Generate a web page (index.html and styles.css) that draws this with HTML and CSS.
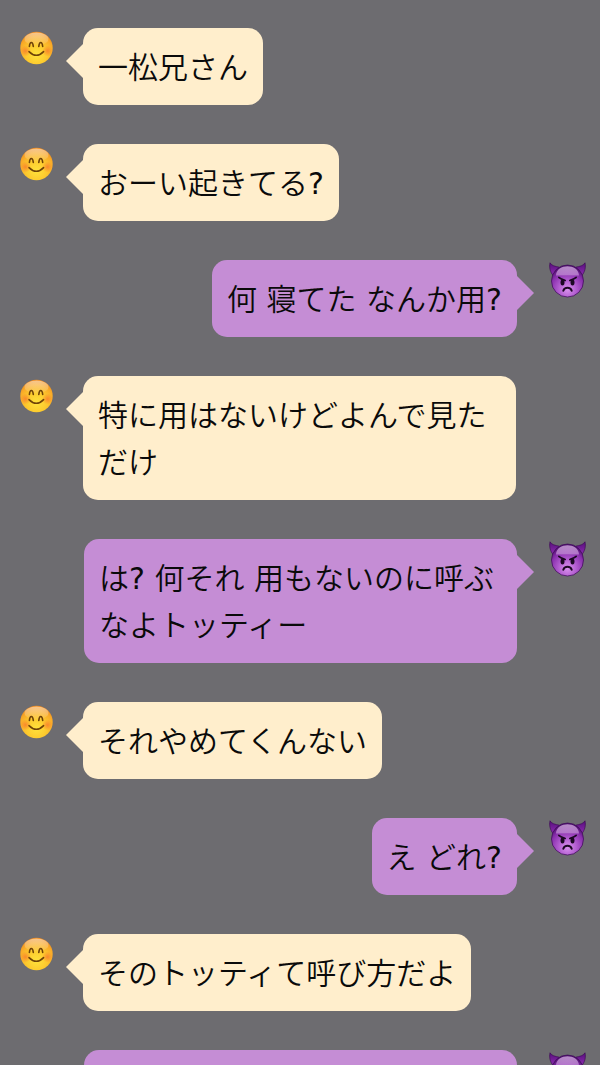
FILE: index.html
```html
<!DOCTYPE html>
<html lang="ja">
  <head>
    <meta charset="utf-8" />
    <meta name="viewport" content="width=device-width, initial-scale=1.0" />
    <title>トーク</title>
    <link rel="stylesheet" href="styles.css">
  </head>

  <body>
    <!-- shared avatars -->
    <svg class="defs" aria-hidden="true">
      <defs>
        <radialGradient id="face" cx="50%" cy="70%" r="68%">
          <stop offset="0" stop-color="#ffe23c" />
          <stop offset="0.45" stop-color="#fdcb2e" />
          <stop offset="0.8" stop-color="#f9ab28" />
          <stop offset="1" stop-color="#ee8a1c" />
        </radialGradient>
        <linearGradient id="shine" x1="0" y1="0" x2="0" y2="1">
          <stop offset="0" stop-color="#fff" stop-opacity="0.5" />
          <stop offset="1" stop-color="#fff" stop-opacity="0.05" />
        </linearGradient>
        <radialGradient id="blush">
          <stop offset="0" stop-color="#f8742c" stop-opacity="0.75" />
          <stop offset="1" stop-color="#f8742c" stop-opacity="0" />
        </radialGradient>
        <radialGradient id="devil" cx="50%" cy="76%" r="72%">
          <stop offset="0" stop-color="#d992ee" />
          <stop offset="0.4" stop-color="#b05bce" />
          <stop offset="0.75" stop-color="#882eac" />
          <stop offset="1" stop-color="#4b0b6b" />
        </radialGradient>
        <linearGradient id="devilShine" x1="0" y1="0" x2="0" y2="1">
          <stop offset="0" stop-color="#c9a3d6" stop-opacity="0.85" />
          <stop offset="1" stop-color="#bb83d0" stop-opacity="0.8" />
        </linearGradient>
        <linearGradient id="horn" x1="0" y1="0" x2="0" y2="1">
          <stop offset="0" stop-color="#57107a" />
          <stop offset="1" stop-color="#8f2cb4" />
        </linearGradient>
      </defs>
      <symbol id="smile" viewBox="0 0 33 34">
        <circle cx="16.5" cy="17" r="16.2" fill="url(#face)" />
        <ellipse cx="16.5" cy="8" rx="12" ry="6.5" fill="url(#shine)" />
        <circle cx="5.5" cy="20" r="5.5" fill="url(#blush)" />
        <circle cx="27.5" cy="20" r="5.5" fill="url(#blush)" />
        <path d="M9.4 15.5C9.8 10.2 12.8 10.2 13.3 15.5M18.8 15.5C19.3 10.2 22.2 10.2 22.7 15.5" fill="none" stroke="#6e4208" stroke-width="1.6" stroke-linecap="round" />
        <path d="M9 20.6Q16.3 28 23.6 20.6" fill="none" stroke="#6e4208" stroke-width="1.5" stroke-linecap="round" />
      </symbol>
      <symbol id="imp" viewBox="0 0 37 36">
        <path d="M1 .8C2.500 3.500 6 4.500 10.500 5.200L4.500 14C1 10 0 5.200 1 .8Z" fill="url(#horn)" stroke="#3f0a58" stroke-width="0.7" />
        <path d="M36 .8C34.500 3.500 31 4.500 26.500 5.200L32.500 14C36 10 37 5.200 36 .8Z" fill="url(#horn)" stroke="#3f0a58" stroke-width="0.7" />
        <circle cx="18.5" cy="19" r="16" fill="url(#devil)" stroke="#43105c" stroke-width="0.8" />
        <path d="M7 13.500C7.500 1.200 29.500 1.200 30 13.500Q18.500 12.800 7 13.500Z" fill="url(#devilShine)" />
        <path d="M9.800 15.400C11.500 17.200 13.500 17.600 16.200 18.400M27.200 15.400C25.500 17.200 23.500 17.600 20.800 18.400" fill="none" stroke="#1c0824" stroke-width="1.600" stroke-linecap="round" />
        <ellipse cx="13.500" cy="20.600" rx="2" ry="3" fill="#1c0824" />
        <ellipse cx="23.500" cy="20.600" rx="2" ry="3" fill="#1c0824" />
        <path d="M14.300 28.700C15.500 24.800 21.500 24.800 22.700 28.700" fill="none" stroke="#1c0824" stroke-width="2" stroke-linecap="round" />
      </symbol>
    </svg>

    <main class="talk">
      <article class="message">
        <svg class="avatar" role="img" aria-label="トッティ"><use href="#smile" /></svg>
        <p class="bubble">一松兄さん</p>
      </article>
      <article class="message">
        <svg class="avatar" role="img" aria-label="トッティ"><use href="#smile" /></svg>
        <p class="bubble">おーい起きてる?</p>
      </article>
      <article class="message reply">
        <svg class="avatar" role="img" aria-label="一松"><use href="#imp" /></svg>
        <p class="bubble">何 寝てた なんか用?</p>
      </article>
      <article class="message">
        <svg class="avatar" role="img" aria-label="トッティ"><use href="#smile" /></svg>
        <p class="bubble">特に用はないけどよんで見ただけ</p>
      </article>
      <article class="message reply">
        <svg class="avatar" role="img" aria-label="一松"><use href="#imp" /></svg>
        <p class="bubble">は? 何それ 用もないのに呼ぶなよトッティー</p>
      </article>
      <article class="message">
        <svg class="avatar" role="img" aria-label="トッティ"><use href="#smile" /></svg>
        <p class="bubble">それやめてくんない</p>
      </article>
      <article class="message reply">
        <svg class="avatar" role="img" aria-label="一松"><use href="#imp" /></svg>
        <p class="bubble">え どれ?</p>
      </article>
      <article class="message">
        <svg class="avatar" role="img" aria-label="トッティ"><use href="#smile" /></svg>
        <p class="bubble">そのトッティて呼び方だよ</p>
      </article>
      <article class="message reply">
        <svg class="avatar" role="img" aria-label="一松"><use href="#imp" /></svg>
        <p class="bubble long"></p>
      </article>
    </main>
  </body>
</html>
```
FILE: styles.css
```css
* {
  box-sizing: border-box;
}

body {
  margin: 0;
  background-color: #6d6c70;
  color: #0a0a0a;
  font-family: "DejaVu Sans", "Noto Sans CJK JP DemiLight", "Noto Sans CJK JP", sans-serif;
  font-size: 30px;
  line-height: 47px;
}

.defs {
  position: absolute;
  width: 0;
  height: 0;
}

.talk {
  display: flex;
  flex-direction: column;
  gap: 39px;
  padding: 28px 14px 0 20px;
}

.message {
  display: flex;
  align-items: flex-start;
  gap: 30px;
}

.reply {
  flex-direction: row-reverse;
  gap: 32px;
}

.avatar {
  flex: none;
  width: 33px;
  height: 34px;
  margin-top: 3px;
}

.reply .avatar {
  width: 37px;
  height: 36px;
  margin-top: 2px;
}

.bubble {
  position: relative;
  max-width: 433px;
  min-height: 77px;
  margin: 0;
  padding: 16px 15px 14px;
  border-radius: 15px;
  background-color: #ffeecc;
}

.reply .bubble {
  background-color: #c58dd5;
}

.bubble.long {
  width: 100%;
}

/* tail of the bubble */
.bubble::before {
  content: "";
  position: absolute;
  top: 16px;
  right: 100%;
  border: 17px solid transparent;
  border-left-width: 0;
  border-right-color: #ffeecc;
}

.reply .bubble::before {
  right: auto;
  left: 100%;
  border-width: 17px 0 17px 17px;
  border-color: transparent;
  border-left-color: #c58dd5;
}
```
